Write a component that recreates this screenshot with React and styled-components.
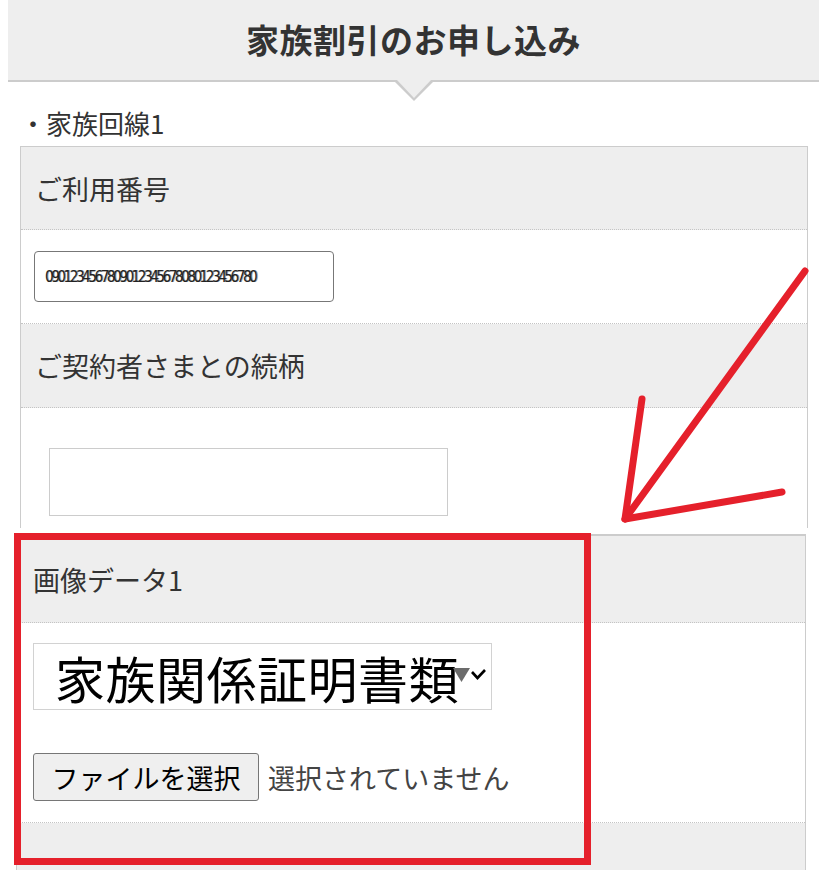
import React from 'react';
import styled, { createGlobalStyle } from 'styled-components';

const Global = createGlobalStyle`
  html, body {
    margin: 0;
    padding: 0;
    background: #fff;
  }
  body {
    font-family: "Noto Sans CJK JP", "Noto Sans", sans-serif;
    color: #333;
  }
`;

const Page = styled.div`
  position: relative;
  width: 828px;
  height: 870px;
  overflow: hidden;
`;

const Header = styled.header`
  position: relative;
  margin: 0 9px 0 8px;
  height: 80px;
  background: #eeeeee;
  border-bottom: 2px solid #cccccc;
  display: flex;
  align-items: center;
  justify-content: center;

  &::before,
  &::after {
    content: '';
    position: absolute;
    left: 50%;
    width: 0;
    height: 0;
    border-style: solid;
  }
  &::before {
    top: 82px;
    margin-left: -19px;
    border-width: 19px 19px 0 19px;
    border-color: #cccccc transparent transparent transparent;
  }
  &::after {
    top: 80px;
    margin-left: -17px;
    border-width: 18px 17px 0 17px;
    border-color: #eeeeee transparent transparent transparent;
  }
`;

const Title = styled.h1`
  margin: 0 0 2px;
  font-size: 33px;
  font-weight: bold;
  color: #333;
  letter-spacing: 0.5px;
`;

const LineTitle = styled.p`
  margin: 0;
  padding: 26px 0 0 20px;
  height: 38px;
  font-size: 26px;
  line-height: 30px;
  color: #333;
`;

const FormBox = styled.section`
  margin-left: ${(p) => p.$left}px;
  width: ${(p) => p.$width}px;
  border: 1px solid #cccccc;
  border-top-width: ${(p) => p.$top}px;
  border-bottom: none;
  margin-top: ${(p) => p.$gap}px;
`;

const LabelRow = styled.div`
  height: ${(p) => p.$h}px;
  background: #eeeeee;
  display: flex;
  align-items: center;
  padding-left: ${(p) => p.$pad}px;
  font-size: 27px;
  color: #333;
  border-bottom: 1px dotted #c4c4c4;
`;

const FieldRow = styled.div`
  background: #fff;
  padding: ${(p) => p.$pad};
  border-bottom: ${(p) => (p.$last ? 'none' : '1px dotted #c4c4c4')};
  display: flex;
  flex-direction: column;
  align-items: flex-start;
`;

const NumberInput = styled.div`
  width: 288px;
  height: 49px;
  border: 1px solid #777;
  border-radius: 4px;
  padding-left: 10px;
  display: flex;
  align-items: center;
  overflow: hidden;
  font-family: "Liberation Sans Narrow", "DejaVu Sans Condensed", sans-serif;
  font-size: 15px;
  letter-spacing: -2.4px;
  color: #222;
  white-space: nowrap;
  text-shadow: 1px 0 0 #999, -1px 0 0 #fff;
`;

const PlainInput = styled.div`
  margin-left: 28px;
  width: 397px;
  height: 66px;
  border: 1px solid #cccccc;
  background: #fff;
`;

const SelectWrap = styled.div`
  position: relative;
  width: 457px;
  height: 65px;
  border: 1px solid #d2d2d2;
  background: #fff;
  display: flex;
  align-items: center;
`;

const SelectText = styled.span`
  padding-left: 21px;
  font-size: 50px;
  line-height: 1;
  color: #000;
  letter-spacing: 0.5px;
  white-space: nowrap;
`;

const SelectArrow = styled.svg`
  position: absolute;
  left: 419px;
  top: 21px;
`;

const FileLine = styled.div`
  margin-top: 43px;
  display: flex;
  align-items: center;
  gap: 9px;
`;

const FileButton = styled.button`
  width: 226px;
  height: 48px;
  padding: 0;
  background: #efefef;
  border: 1px solid #767676;
  border-radius: 3px;
  font-family: inherit;
  font-size: 27px;
  color: #000;
`;

const FileStatus = styled.span`
  font-size: 27px;
  color: #444;
`;

const TailRow = styled.div`
  height: 60px;
  background: #eeeeee;
`;

const Highlight = styled.div`
  position: absolute;
  left: 14px;
  top: 533px;
  width: 563px;
  height: 318px;
  border: 7px solid #e5202b;
`;

const Arrow = styled.svg`
  position: absolute;
  left: 0;
  top: 0;
  pointer-events: none;
`;

export default function App() {
  return (
    <Page>
      <Global />
      <Header>
        <Title>家族割引のお申し込み</Title>
      </Header>
      <LineTitle>・家族回線1</LineTitle>

      <FormBox $left={20} $width={786} $top={1} $gap={0}>
        <LabelRow $h={82} $pad={14}>ご利用番号</LabelRow>
        <FieldRow $pad="21px 0 21px 13px">
          <NumberInput>0901234567809012345678080123456780</NumberInput>
        </FieldRow>
        <LabelRow $h={83} $pad={14}>ご契約者さまとの続柄</LabelRow>
        <FieldRow $pad="40px 0 12px 0" $last>
          <PlainInput />
        </FieldRow>
      </FormBox>

      <FormBox $left={16} $width={788} $top={2} $gap={6}>
        <LabelRow $h={86} $pad={16}>画像データ1</LabelRow>
        <FieldRow $pad="20px 0 21px 16px">
          <SelectWrap>
            <SelectText>家族関係証明書類</SelectText>
            <SelectArrow width="36" height="20" viewBox="0 0 36 20">
              <polygon points="0,3 17,3 8.5,17" fill="#6b6b6b" />
              <polyline points="19,7 24.5,13 32,5" fill="none" stroke="#000" strokeWidth="2.6" />
            </SelectArrow>
          </SelectWrap>
          <FileLine>
            <FileButton>ファイルを選択</FileButton>
            <FileStatus>選択されていません</FileStatus>
          </FileLine>
        </FieldRow>
        <TailRow />
      </FormBox>

      <Highlight />
      <Arrow width="828" height="870" viewBox="0 0 828 870">
        <g stroke="#e5202b" strokeWidth="7" strokeLinecap="round" strokeLinejoin="round" fill="none">
          <line x1="805" y1="271" x2="625" y2="519" />
          <polyline points="642,399 625,519 782,492" />
        </g>
      </Arrow>
    </Page>
  );
}
